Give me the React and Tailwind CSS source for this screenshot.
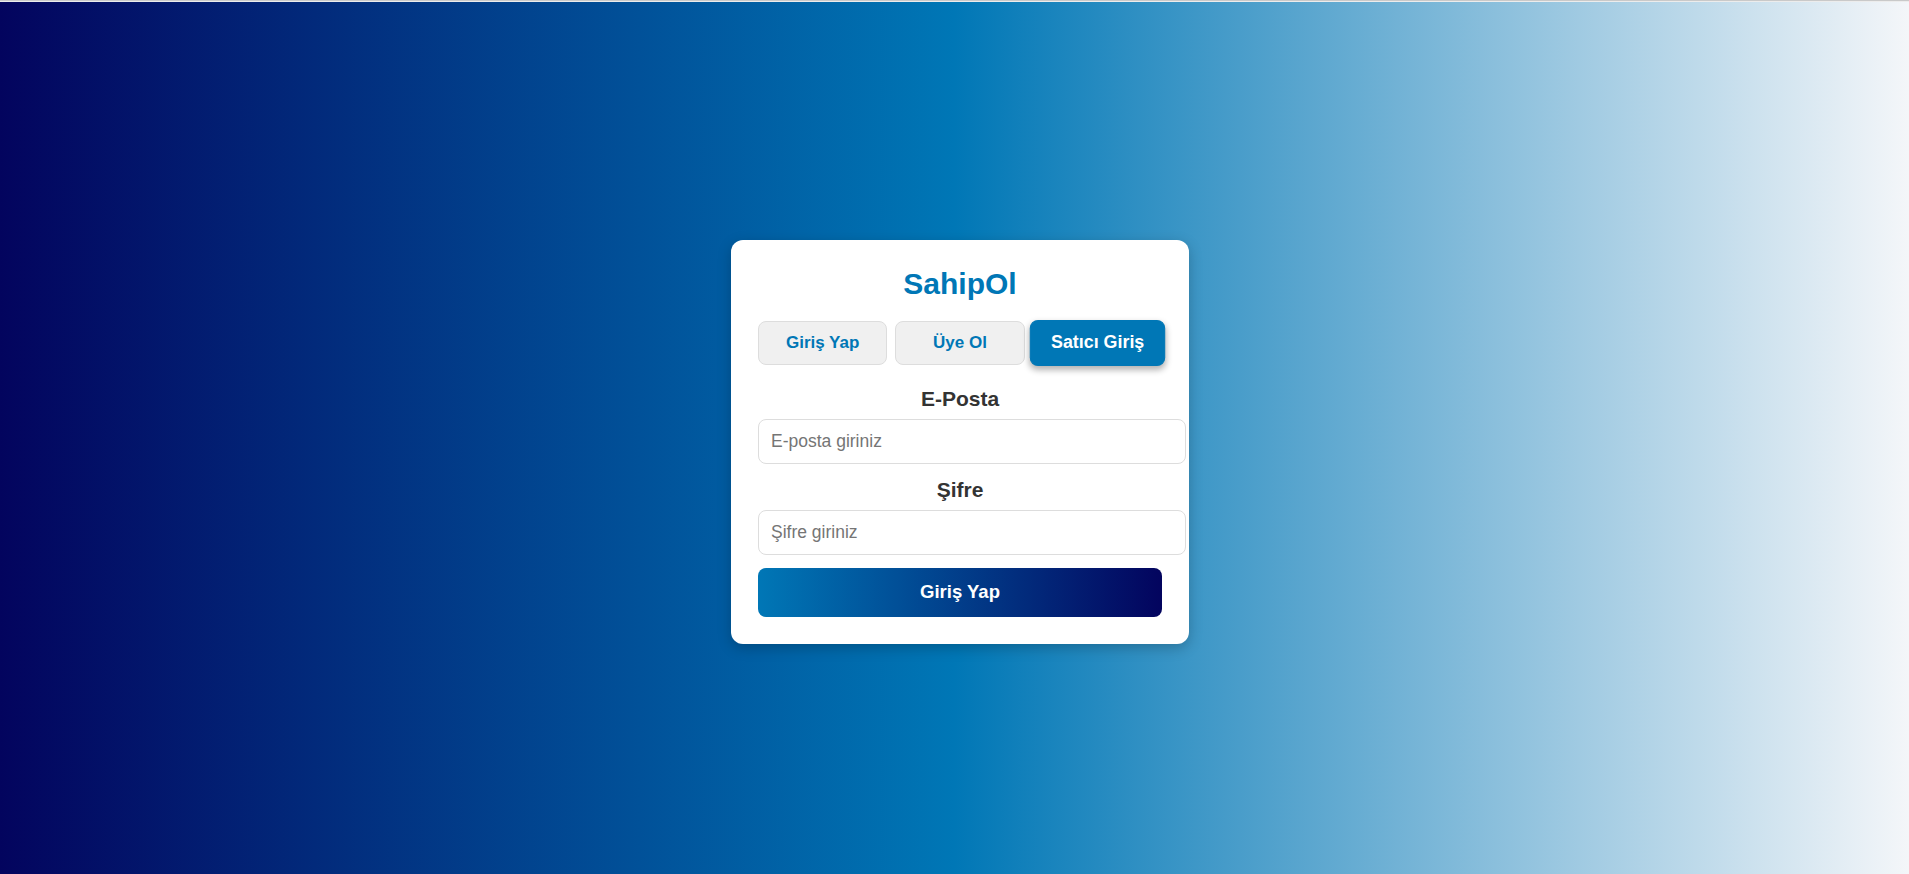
import React from "react";

export default function App() {
  return (
    <div className="w-full h-[874px] flex flex-col font-['Liberation_Sans',Arial,sans-serif] overflow-hidden">
      <div className="h-[1px] bg-[#c9c9c9] shrink-0" />
      <div className="h-[1px] bg-[#ececec] shrink-0" />
      <div className="flex-1 flex items-center justify-center pl-[11px] pt-[7px] bg-[linear-gradient(to_right,#03045e_0%,#0077b6_50%,#f4f6f9_100%)]">
        <div className="w-[458px] bg-white rounded-[12px] px-[27px] pt-[28px] pb-[27px] shadow-[0_4px_14px_rgba(0,0,0,0.22)]">
          <h2 className="text-center text-[30px] leading-[32px] font-bold text-[#0077b6] mb-[21px]">
            SahipOl
          </h2>
          <div className="grid grid-cols-3 gap-[8px] mb-[22px]">
            <button className="h-[44px] rounded-[8px] bg-[#f0f0f0] border border-[#dddddd] text-[#0077b6] font-bold text-[17px]">
              Giriş Yap
            </button>
            <button className="h-[44px] rounded-[8px] bg-[#f0f0f0] border border-[#dddddd] text-[#0077b6] font-bold text-[17px]">
              Üye Ol
            </button>
            <button className="h-[44px] rounded-[8px] bg-[#0077b6] border border-[#0077b6] text-white font-bold text-[17px] scale-105 shadow-[0_3px_6px_rgba(0,0,0,0.3)]">
              Satıcı Giriş
            </button>
          </div>
          <div className="mb-[14px]">
            <label className="block text-center text-[21px] leading-[24px] font-bold text-[#333333] mb-[8px]">
              E-Posta
            </label>
            <input
              type="email"
              placeholder="E-posta giriniz"
              className="block w-[428px] h-[45px] px-[12px] rounded-[8px] border border-[#dddddd] text-[17.5px] text-[#333] placeholder:text-[#757575] outline-none bg-white"
            />
          </div>
          <div className="mb-[13px]">
            <label className="block text-center text-[21px] leading-[24px] font-bold text-[#333333] mb-[8px]">
              Şifre
            </label>
            <input
              type="password"
              placeholder="Şifre giriniz"
              className="block w-[428px] h-[45px] px-[12px] rounded-[8px] border border-[#dddddd] text-[17.5px] text-[#333] placeholder:text-[#757575] outline-none bg-white"
            />
          </div>
          <button className="w-full h-[49px] rounded-[8px] bg-[linear-gradient(to_right,#0077b6,#03045e)] text-white font-bold text-[18.5px]">
            Giriş Yap
          </button>
        </div>
      </div>
    </div>
  );
}
